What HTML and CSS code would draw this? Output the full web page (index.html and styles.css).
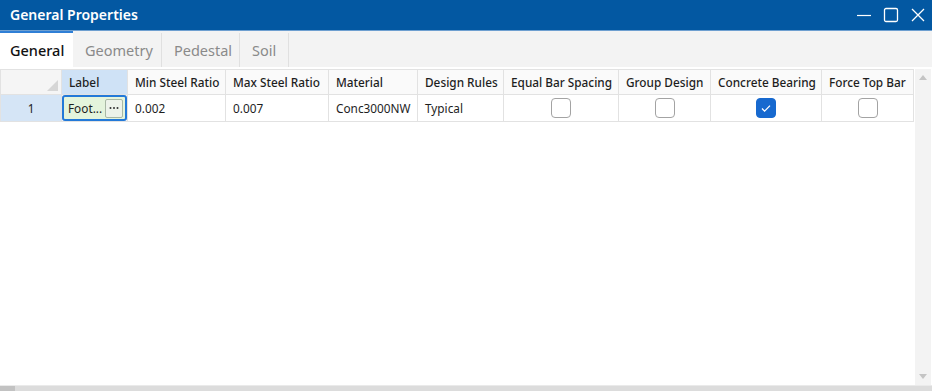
FILE: index.html
```html
<!DOCTYPE html>
<html>
  <head>
    <title>General Properties</title>
    <link rel="stylesheet" href="styles.css">
  </head>
  <body>
    <div class="window">
      <div class="titlebar">
        <span class="title">General Properties</span>
        <div class="controls">
          <svg width="16" height="16" viewBox="0 0 16 16"><path d="M1 8.5h14" stroke="#fff" stroke-width="1.2" fill="none"/></svg>
          <svg width="16" height="16" viewBox="0 0 16 16"><rect x="1.5" y="1.5" width="13" height="13" rx="1.5" stroke="#fff" stroke-width="1.3" fill="none"/></svg>
          <svg width="16" height="16" viewBox="0 0 16 16"><path d="M2 2l12 12M14 2L2 14" stroke="#fff" stroke-width="1.3" fill="none"/></svg>
        </div>
      </div>
      <div class="tabs">
        <div class="tab active">General</div>
        <div class="tab">Geometry</div>
        <div class="tab">Pedestal</div>
        <div class="tab">Soil</div>
      </div>
      <div class="grid-area">
        <div class="grid-wrap">
          <table class="grid">
            <colgroup>
              <col style="width:61px">
              <col style="width:66px">
              <col style="width:98px">
              <col style="width:103px">
              <col style="width:89px">
              <col style="width:86px">
              <col style="width:115px">
              <col style="width:92px">
              <col style="width:111px">
              <col style="width:92px">
            </colgroup>
            <thead>
              <tr>
                <th class="corner"><span class="tri"></span></th>
                <th class="sel">Label</th>
                <th>Min Steel Ratio</th>
                <th>Max Steel Ratio</th>
                <th>Material</th>
                <th>Design Rules</th>
                <th>Equal Bar Spacing</th>
                <th>Group Design</th>
                <th>Concrete Bearing</th>
                <th>Force Top Bar</th>
              </tr>
            </thead>
            <tbody>
              <tr>
                <td class="rowhead">1</td>
                <td class="edit">
                  <div class="editor">
                    <span>Foot...</span>
                    <span class="dots"><svg width="10" height="4" viewBox="0 0 10 4"><circle cx="1.5" cy="2" r="1" fill="#333"/><circle cx="5" cy="2" r="1" fill="#333"/><circle cx="8.5" cy="2" r="1" fill="#333"/></svg></span>
                  </div>
                </td>
                <td>0.002</td>
                <td>0.007</td>
                <td>Conc3000NW</td>
                <td>Typical</td>
                <td class="chk"><span class="box"></span></td>
                <td class="chk"><span class="box"></span></td>
                <td class="chk"><span class="box on"><svg width="12" height="12" viewBox="0 0 12 12"><path d="M2 6.5l2.6 2.6L10 3.6" stroke="#fff" stroke-width="1.3" fill="none"/></svg></span></td>
                <td class="chk"><span class="box"></span></td>
              </tr>
            </tbody>
          </table>
        </div>
        <div class="vscroll">
          <span class="arrow up"></span>
          <span class="arrow down"></span>
        </div>
      </div>
      <div class="hscroll"><span class="thumb"></span></div>
    </div>
  </body>
</html>
```

FILE: styles.css
```css
body {
  margin: 0;
  font-family: "Noto Sans", "Open Sans", sans-serif;
  background-color: #fff;
}

.window {
  width: 932px;
  height: 391px;
  display: flex;
  flex-direction: column;
  overflow: hidden;
}

.titlebar {
  height: 31px;
  flex-shrink: 0;
  background-color: #0358a2;
  border-bottom: 1px solid #6e9fd0;
  display: flex;
  align-items: center;
  justify-content: space-between;
  padding: 0 6px 1px 10px;
  box-sizing: border-box;
}

.title {
  color: #fff;
  font-size: 14px;
  font-weight: 600;
}

.controls {
  display: flex;
  gap: 11px;
  padding-top: 1px;
}

.tabs {
  height: 38px;
  flex-shrink: 0;
  background-color: #f3f3f3;
  display: flex;
  align-items: stretch;
  padding-top: 2px;
  box-sizing: border-box;
  border-bottom: 2px solid #fff;
}

.tab {
  font-size: 14.5px;
  color: #8a8a8a;
  padding: 0 12px;
  display: flex;
  align-items: center;
  border-right: 1px solid #e0e0e0;
}

.tab:nth-child(2) { width: 64px; }
.tab:nth-child(3) { width: 53px; }
.tab:nth-child(4) { width: 24px; }

.tab.active {
  width: 51px;
  padding: 0 12px 0 10px;
  background-color: #fff;
  color: #111;
  font-weight: 500;
  border-top: 2px solid #2f7fd6;
  border-right: none;
  margin-top: -2px;
}

.grid-area {
  flex: 1;
  display: flex;
}

.grid-wrap {
  flex: 1;
}

.grid {
  width: 913px;
  border-collapse: collapse;
  table-layout: fixed;
  font-size: 11.8px;
  color: #1e1e1e;
}

.grid th,
.grid td {
  height: 26px;
  padding: 0 7px;
  border: 1px solid #e2e2e2;
  text-align: left;
  white-space: nowrap;
  overflow: hidden;
  box-sizing: border-box;
}

.grid th {
  height: 25px;
  font-weight: 500;
  background-color: #fafafa;
}

.grid th.sel {
  background-color: #cfe2f6;
}

.grid th.corner {
  position: relative;
  background-color: #f5f5f5;
}

.tri {
  position: absolute;
  right: 3px;
  bottom: 3px;
  width: 0;
  height: 0;
  border-left: 11px solid transparent;
  border-bottom: 11px solid #d6d6d6;
}

.rowhead {
  background-color: #d5e5f6;
  text-align: center !important;
}

.grid td.edit {
  padding: 0;
}

.editor {
  height: 26px;
  border: 2px solid #2379d8;
  border-radius: 3px;
  background-color: #e4f4dc;
  display: flex;
  align-items: center;
  justify-content: space-between;
  padding: 0 2px 0 4px;
  box-sizing: border-box;
}

.dots {
  width: 18px;
  height: 19px;
  border: 1px solid #a9b8a5;
  border-radius: 2px;
  background-color: #edf3ea;
  display: flex;
  align-items: center;
  justify-content: center;
  box-sizing: border-box;
}

.chk {
  text-align: center !important;
}

.box {
  display: inline-flex;
  align-items: center;
  justify-content: center;
  width: 18px;
  height: 18px;
  border: 1px solid #a3a3a3;
  border-radius: 4px;
  vertical-align: middle;
  background-color: #fff;
}

.box.on {
  background-color: #1769cf;
  border-color: #1769cf;
}

.vscroll {
  width: 16px;
  background-color: #f3f3f3;
  margin-right: 1px;
  display: flex;
  flex-direction: column;
  justify-content: space-between;
  align-items: center;
  padding: 6px 0;
}

.arrow {
  width: 0;
  height: 0;
  border-left: 4px solid transparent;
  border-right: 4px solid transparent;
}

.arrow.up { border-bottom: 5px solid #c4c4c4; }
.arrow.down { border-top: 5px solid #c4c4c4; }

.hscroll {
  height: 5px;
  flex-shrink: 0;
  background-color: #dcdcdc;
  border-top: 1px solid #eaeaea;
}

.thumb {
  display: block;
  width: 15px;
  height: 5px;
  background-color: #c2c2c2;
}
```
